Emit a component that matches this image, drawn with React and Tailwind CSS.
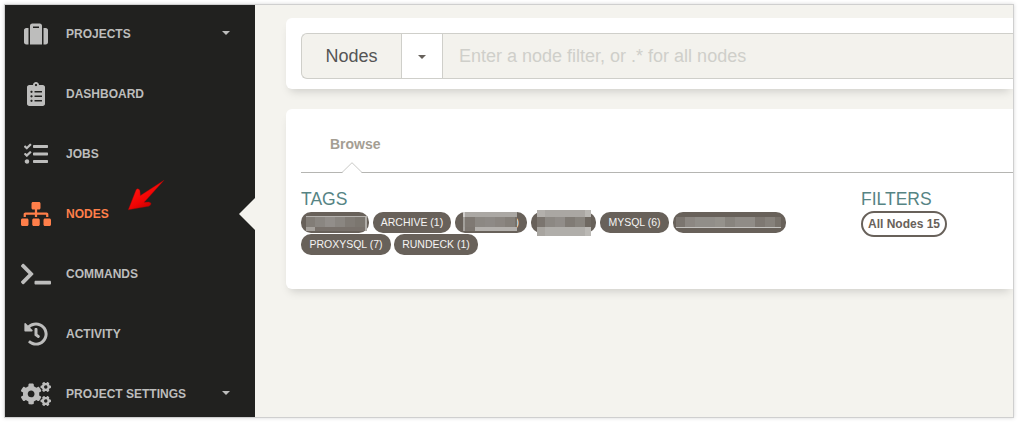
import React from "react";
import {
  FaSuitcase,
  FaClipboardList,
  FaTasks,
  FaSitemap,
  FaTerminal,
  FaHistory,
  FaCogs,
} from "react-icons/fa";

const navItems = [
  { label: "PROJECTS", Icon: FaSuitcase, caret: true },
  { label: "DASHBOARD", Icon: FaClipboardList },
  { label: "JOBS", Icon: FaTasks },
  { label: "NODES", Icon: FaSitemap, active: true },
  { label: "COMMANDS", Icon: FaTerminal },
  { label: "ACTIVITY", Icon: FaHistory },
  { label: "PROJECT SETTINGS", Icon: FaCogs, caret: true },
];

// Pixelated covers over private tag names: [x, y, width, height, fill]
const coverA = [
  [5, 4, 62, 1, "#b5b2ae"],
  [5, 5, 9, 10, "#827d77"], [14, 5, 10, 10, "#8a8681"], [24, 5, 10, 10, "#928e8a"],
  [34, 5, 10, 10, "#8a8681"], [44, 5, 10, 10, "#807b75"], [54, 5, 10, 10, "#7b766f"],
  [64, 5, 2, 14, "#b0ada8"],
  [5, 15, 9, 4, "#a5a19c"], [14, 15, 50, 4, "#78716b"],
];
const coverB = [
  [8, 0, 54, 5, "#aba8a4"], [8, 0, 2, 5, "#d0cecc"],
  [8, 5, 2, 10, "#a29f9a"], [10, 5, 10, 10, "#7f7973"], [20, 5, 10, 10, "#8c8883"],
  [30, 5, 10, 10, "#8e8a86"], [40, 5, 10, 10, "#8b8681"], [50, 5, 10, 10, "#85807a"],
  [60, 5, 2, 10, "#77716a"],
  [8, 15, 2, 4, "#a6a29e"], [10, 15, 10, 4, "#7d7771"], [20, 15, 42, 4, "#b4b1ad"],
];
const coverC = [
  [6, -2, 8, 7, "#b3b0ac"], [14, -2, 40, 7, "#aaa7a3"], [54, -2, 6, 7, "#b9b7b3"],
  [6, 5, 8, 10, "#7b756f"], [14, 5, 10, 10, "#8c8883"], [24, 5, 10, 10, "#918d89"],
  [34, 5, 10, 10, "#807b75"], [44, 5, 10, 10, "#88847e"], [54, 5, 6, 10, "#6f6962"],
  [6, 15, 8, 9, "#a8a5a0"], [14, 15, 40, 9, "#b0aeaa"], [54, 15, 6, 9, "#bbb9b5"],
];
const coverD = [
  [3, 5, 9, 10, "#7b756f"], [12, 5, 10, 10, "#8c8782"], [22, 5, 20, 10, "#918e89"],
  [42, 5, 10, 10, "#95928c"], [52, 5, 10, 10, "#88847e"], [62, 5, 20, 10, "#908c87"],
  [82, 5, 10, 10, "#7e7872"], [92, 5, 10, 10, "#86817b"], [102, 5, 6, 10, "#78726b"],
  [3, 15, 105, 1, "#c3c1be"],
];

const tagRows = [
  [
    { cover: coverA, width: "w-[68px]" },
    { label: "ARCHIVE (1)", width: "w-[78px]" },
    { cover: coverB, width: "w-[72px]", tail: ")" },
    { cover: coverC, width: "w-[65px]" },
    { label: "MYSQL (6)", width: "w-[69px]" },
    { cover: coverD, width: "w-[113px]" },
  ],
  [
    { label: "PROXYSQL (7)", width: "w-[90px]" },
    { label: "RUNDECK (1)", width: "w-[84px]" },
  ],
];

function Caret({ className }) {
  return (
    <svg viewBox="0 0 8 4" className={`h-1 w-2 ${className}`} fill="currentColor">
      <path d="M0 0h8L4 4z" />
    </svg>
  );
}

function NavItem({ label, Icon, caret, active }) {
  return (
    <li
      className={`relative flex h-[60px] shrink-0 items-center pl-4 pr-[25px] ${
        active ? "text-[#ff7f4a]" : "text-[#bdbdbc]"
      }`}
    >
      <Icon className="h-6 w-[30px] shrink-0" />
      <span className="ml-[15px] whitespace-nowrap text-xs font-bold leading-5">{label}</span>
      {caret && <Caret className="ml-auto -translate-y-px" />}
      {active && (
        <>
          <svg className="absolute left-[122px] top-[-6px] h-9 w-10" viewBox="0 0 40 36">
            <defs>
              <linearGradient id="pointer" x1="0.2" y1="0.2" x2="0.7" y2="0.9">
                <stop offset="0" stopColor="#ff1510" />
                <stop offset="0.6" stopColor="#f00404" />
                <stop offset="1" stopColor="#c00000" />
              </linearGradient>
            </defs>
            <path
              d="M37 2.200 L13.400 17.600 L12.900 12.600 Q12.300 10.700 10.600 10.700 Q9.200 10.800 8.800 12.500 L1.300 31.800 L21.800 28.200 Q24.200 27.300 24 25.500 Q23.500 24 21.500 24 L17.200 24.300 Z"
              fill="url(#pointer)"
              stroke="#a00505"
              strokeWidth="0.4"
              strokeLinejoin="round"
            />
          </svg>
          <svg className="absolute right-0 top-[14px] h-8 w-4" viewBox="0 0 16 32">
            <path d="M16 0v32L0 16z" fill="#f4f3ee" />
          </svg>
        </>
      )}
    </li>
  );
}

function Tag({ label, cover, width, tail }) {
  return (
    <li
      className={`relative flex h-[21px] shrink-0 items-center justify-center rounded-[10px] bg-[#68615a] text-[10.5px] leading-none text-[#f5f4f3] ${width}`}
    >
      {label && <span className="whitespace-nowrap">{label}</span>}
      {tail && <span className="ml-auto pr-2">{tail}</span>}
      {cover && (
        <svg className="absolute inset-0 h-full w-full overflow-visible" shapeRendering="crispEdges">
          {cover.map(([x, y, w, h, fill], i) => (
            <rect key={i} x={x} y={y} width={w} height={h} fill={fill} />
          ))}
        </svg>
      )}
    </li>
  );
}

export default function App() {
  return (
    <div className="h-[422px] w-[1018px] overflow-hidden bg-white p-[5px] font-['Liberation_Sans',Arial,sans-serif]">
      <div className="flex h-[412px] w-[1008px] overflow-hidden bg-[#f4f3ee] shadow-[0_0_0_1px_#cfcfcf,0_0_4px_1px_rgba(0,0,0,0.16)]">
        <nav className="w-[250px] shrink-0 bg-[#21211f]">
          <ul className="-mt-px flex flex-col">
            {navItems.map((item) => (
              <NavItem key={item.label} {...item} />
            ))}
          </ul>
        </nav>

        <main className="ml-[31px] flex min-w-0 flex-1 flex-col gap-5 pt-[13px]">
          <section className="h-[71px] shrink-0 rounded-l-md bg-white pl-[15px] pt-[15px] shadow-[0_6px_10px_-4px_rgba(0,0,0,0.17)]">
            <div className="flex h-[46px] overflow-hidden rounded-l-md border border-r-0 border-[#cfcfca] bg-[#f3f2ed] text-lg">
              <div className="flex w-[99px] items-center justify-center text-[#555]">Nodes</div>
              <div className="flex w-[42px] items-center justify-center border-x border-[#cfcfca] bg-white text-[#66615b]">
                <Caret className="translate-y-px" />
              </div>
              <div className="flex flex-1 items-center pl-4 text-[#cfcfca]">
                Enter a node filter, or .* for all nodes
              </div>
            </div>
          </section>

          <section className="h-[180px] shrink-0 rounded-l-md bg-white pl-[15px] shadow-[0_6px_10px_-4px_rgba(0,0,0,0.17)]">
            <div className="relative h-16 border-b border-[#b5b5b2] pl-[29px] pt-[23px]">
              <span className="text-sm font-bold leading-5 text-[#a49e93]">Browse</span>
              <svg className="absolute left-[41px] top-[53px] h-[11px] w-5" viewBox="0 0 20 11">
                <path d="M0 11L10 1l10 10z" fill="white" />
                <path d="M0 10.500L10 .7l10 9.800" fill="none" stroke="#c9c9c6" />
              </svg>
            </div>
            <div className="flex pt-[15px]">
              <div className="w-[560px]">
                <h2 className="text-[17.5px] leading-[22px] text-[#568484]">TAGS</h2>
                <div className="mt-0.5 flex flex-col gap-px">
                  <ul className="flex gap-1">
                    {tagRows[0].map((tag, i) => (
                      <Tag key={i} {...tag} />
                    ))}
                  </ul>
                  <ul className="flex gap-[3px]">
                    {tagRows[1].map((tag) => (
                      <Tag key={tag.label} {...tag} />
                    ))}
                  </ul>
                </div>
              </div>
              <div>
                <h2 className="text-[17.5px] leading-[22px] text-[#568484]">FILTERS</h2>
                <button className="mt-px flex h-[26px] w-[86px] items-center justify-center whitespace-nowrap rounded-full border-2 border-[#68615a] text-xs font-bold leading-none text-[#68615a]">
                  All Nodes 15
                </button>
              </div>
            </div>
          </section>
        </main>
      </div>
    </div>
  );
}
